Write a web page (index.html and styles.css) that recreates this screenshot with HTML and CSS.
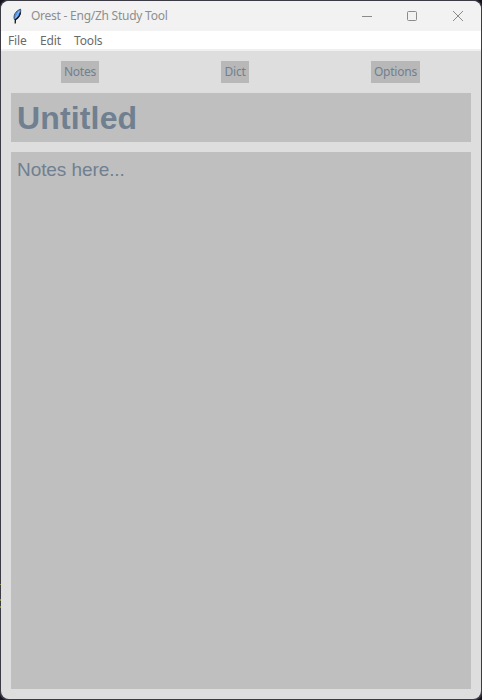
FILE: index.html
```html
<!DOCTYPE html>
<html lang="en">
<head>
<meta charset="utf-8">
<title>Orest - Eng/Zh Study Tool</title>
<link rel="stylesheet" href="styles.css">
</head>
<body>
<div class="window">
  <header class="titlebar">
    <svg class="feather" width="12" height="18" viewBox="0 0 12 18">
      <path d="M3.4 12.5C2 9 4.2 3.8 9.6 2.2C10.4 6 8.2 10.6 4.4 12.6Z" fill="#4f94e8" stroke="#2b3644" stroke-width="0.8"/>
      <path d="M8.3 4L4.3 11.5" stroke="#8fc0f7" stroke-width="1"/>
      <path d="M9.4 5.5C9 8.6 7 11.2 4.4 12.6L4.2 16.5" fill="none" stroke="#101216" stroke-width="1.3"/>
    </svg>
    <span class="caption">Orest - Eng/Zh Study Tool</span>
    <div class="controls">
      <svg width="12" height="12" viewBox="0 0 12 12"><path d="M1 6.5H11"/></svg>
      <svg width="12" height="12" viewBox="0 0 12 12"><rect x="1.5" y="1.5" width="9" height="9" rx="1"/></svg>
      <svg width="12" height="12" viewBox="0 0 12 12"><path d="M1 1L11 11M11 1L1 11"/></svg>
    </div>
  </header>
  <nav class="menu">
    <span class="file">File</span><span class="edit">Edit</span><span class="tools">Tools</span>
  </nav>
  <main class="content">
    <div class="tabs">
      <button class="tab notes">Notes</button>
      <button class="tab dict">Dict</button>
      <button class="tab options">Options</button>
    </div>
    <div class="title">Untitled</div>
    <div class="editor">Notes here...</div>
  </main>
</div>
</body>
</html>
```
FILE: styles.css
```css
* { box-sizing: border-box; }
html { background: #15131f; }
body {
  margin: 0;
  height: 700px;
  padding: 1px;
  border-radius: 7px;
  background:
    linear-gradient(#7d8f4a, #7d8f4a) 0 584px / 1px 1px no-repeat,
    linear-gradient(#7d8f4a, #7d8f4a) 0 599px / 1px 2px no-repeat,
    linear-gradient(#7d8f4a, #7d8f4a) 0 606px / 1px 2px no-repeat,
    #3c3a43;
  overflow: hidden;
  font-family: "Noto Sans", "Open Sans", sans-serif;
  font-size: 12px;
}
.window {
  display: flex;
  flex-direction: column;
  width: 480px;
  height: 698px;
  border-radius: 8px;
  overflow: hidden;
  background: #dedede;
}
.titlebar {
  display: flex;
  align-items: center;
  height: 30px;
  flex: none;
  padding: 0 17px 0 10px;
  background: #f2f2f2;
  color: #8e8e8e;
}
.feather { margin-right: 8px; }
.caption { white-space: nowrap; letter-spacing: -0.25px; line-height: 17px; padding-bottom: 1px; }
.controls { display: flex; margin-left: auto; }
.controls svg { fill: none; stroke: #8b8b8b; stroke-width: 1; margin-left: 34px; }
.controls svg:nth-child(2) { margin-left: 33px; }
.controls svg:first-child { margin-left: 0; }
.menu {
  display: flex;
  height: 20px;
  flex: none;
  padding-left: 7px;
  border-bottom: 2px solid #f0f0f0;
  background: #fff;
  color: #6a6a6a;
  line-height: 20px;
  letter-spacing: -0.15px;
}
.file { width: 32px; }
.edit { width: 34px; }
.content {
  display: flex;
  flex-direction: column;
  flex: 1;
  gap: 10px;
  padding: 10px;
  color: #708090;
}
.tabs { display: flex; justify-content: space-between; padding: 0 51px 0 50px; }
.tab {
  height: 22px;
  padding: 0;
  border: 0;
  background: #b8b8b8;
  color: #708090;
  font: inherit;
  line-height: 22px;
  letter-spacing: -0.2px;
}
.notes { width: 38px; }
.dict { width: 28px; }
.options { width: 49px; }
.title, .editor {
  padding-left: 6px;
  background: #bfbfbf;
  font-family: "Liberation Sans", Arial, sans-serif;
}
.title { height: 49px; font-size: 32px; font-weight: bold; line-height: 50px; letter-spacing: 0.15px; }
.editor { flex: 1; padding-top: 7px; font-size: 19px; line-height: 22px; letter-spacing: -0.08px; }
```
